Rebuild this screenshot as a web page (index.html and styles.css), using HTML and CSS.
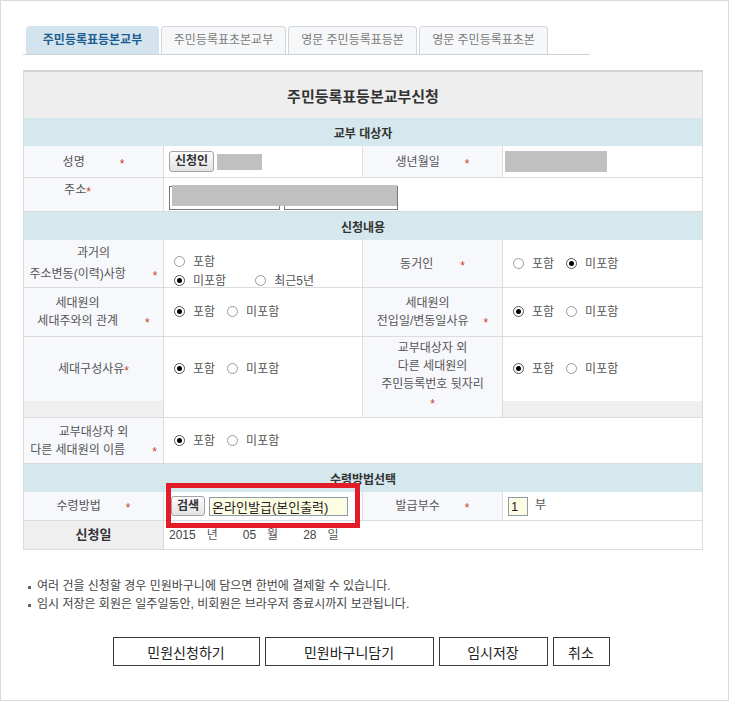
FILE: index.html
```html
<!DOCTYPE html>
<html lang="ko">
<head>
    <meta charset="UTF-8">
    <meta name="viewport" content="width=device-width, initial-scale=1.0">
    <title>주민등록표등본교부</title>
    <link rel="stylesheet" href="styles.css">
</head>
<body>
<div class="page">
    <!-- 상단 탭 -->
    <ul class="tabs">
        <li class="tab tab-1 on">주민등록표등본교부</li>
        <li class="tab tab-2">주민등록표초본교부</li>
        <li class="tab tab-3">영문 주민등록표등본</li>
        <li class="tab tab-4">영문 주민등록표초본</li>
    </ul>

    <!-- 신청서 -->
    <div class="form-wrap">
        <table class="form">
            <colgroup>
                <col class="col-lbl">
                <col class="col-val">
                <col class="col-lbl">
                <col class="col-val2">
            </colgroup>
            <tr class="row-title">
                <th colspan="4" class="title">주민등록표등본교부신청</th>
            </tr>
            <tr class="row-head">
                <th colspan="4" class="head">교부 대상자</th>
            </tr>
            <tr class="row-name">
                <th class="lbl">성명<span class="req gap-l">*</span></th>
                <td class="val"><button type="button" class="btn-s">신청인</button><span class="mask mask-name"></span></td>
                <th class="lbl">생년월일<span class="req">*</span></th>
                <td class="val"><span class="mask mask-birth"></span></td>
            </tr>
            <tr class="row-addr">
                <th class="lbl lbl-top"><span class="shift-l">주소<span class="req tight">*</span></span></th>
                <td class="val val-top" colspan="3">
                    <span class="addr">
                        <input type="text" class="addr-in addr-zip">
                        <input type="text" class="addr-in addr-rest">
                        <span class="mask mask-addr"></span>
                    </span>
                </td>
            </tr>
            <tr class="row-head">
                <th colspan="4" class="head">신청내용</th>
            </tr>
            <tr class="row-past">
                <th class="lbl lh21">과거의<br>주소변동(이력)사항<span class="req gap-m">*</span></th>
                <td class="val val-top">
                    <div class="clip">
                        <label class="opt"><span class="radio"></span>포함</label><br>
                        <label class="opt opt-wide"><span class="radio on"></span>미포함</label><label class="opt"><span class="radio"></span>최근5년</label>
                    </div>
                </td>
                <th class="lbl">동거인<span class="req gap-m">*</span></th>
                <td class="val">
                    <label class="opt"><span class="radio"></span>포함</label><label class="opt"><span class="radio on"></span>미포함</label>
                </td>
            </tr>
            <tr class="row-mem">
                <th class="lbl"><span class="shift-l">세대원의</span><br>세대주와의 관계<span class="req gap-m">*</span></th>
                <td class="val">
                    <label class="opt"><span class="radio on"></span>포함</label><label class="opt"><span class="radio"></span>미포함</label>
                </td>
                <th class="lbl"><span class="shift-s">세대원의</span><br>전입일/변동일사유<span class="req gap-s">*</span></th>
                <td class="val">
                    <label class="opt"><span class="radio on"></span>포함</label><label class="opt"><span class="radio"></span>미포함</label>
                </td>
            </tr>
            <tr class="row-comp">
                <th class="lbl open">세대구성사유<span class="req tight">*</span></th>
                <td class="val open">
                    <label class="opt"><span class="radio on"></span>포함</label><label class="opt"><span class="radio"></span>미포함</label>
                </td>
                <th class="lbl lbl-multi" rowspan="2">교부대상자 외<br>다른 세대원의<br>주민등록번호 뒷자리<br><span class="req tight">*</span></th>
                <td class="val open">
                    <label class="opt"><span class="radio on"></span>포함</label><label class="opt"><span class="radio"></span>미포함</label>
                </td>
            </tr>
            <tr class="row-strip">
                <td class="gray"></td>
                <td class="blank"></td>
                <td class="gray"></td>
            </tr>
            <tr class="row-names">
                <th class="lbl">교부대상자 외<br>다른 세대원의 이름<span class="req gap-m">*</span></th>
                <td class="val" colspan="3">
                    <label class="opt"><span class="radio on"></span>포함</label><label class="opt"><span class="radio"></span>미포함</label>
                </td>
            </tr>
            <tr class="row-head">
                <th colspan="4" class="head">수령방법선택</th>
            </tr>
            <tr class="row-recv">
                <th class="lbl">수령방법<span class="req">*</span></th>
                <td class="val"><button type="button" class="btn-s btn-find">검색</button><input type="text" class="txt txt-recv" value="온라인발급(본인출력)" readonly></td>
                <th class="lbl">발급부수<span class="req">*</span></th>
                <td class="val"><input type="text" class="txt txt-count" value="1"><span class="unit-copy">부</span></td>
            </tr>
            <tr class="row-date">
                <th class="lbl lbl-date">신청일</th>
                <td class="val" colspan="3">
                    <span class="ymd">2015</span><span class="ymd-unit">년</span><span class="ymd">05</span><span class="ymd-unit">월</span><span class="ymd">28</span><span class="ymd-unit">일</span>
                </td>
            </tr>
        </table>

        <!-- 수령방법 강조 표시 -->
        <div class="mark"></div>
    </div>

    <!-- 안내 문구 -->
    <ul class="notes">
        <li>여러 건을 신청할 경우 민원바구니에 담으면 한번에 결제할 수 있습니다.</li>
        <li>임시 저장은 회원은 일주일동안, 비회원은 브라우저 종료시까지 보관됩니다.</li>
    </ul>

    <!-- 하단 버튼 -->
    <div class="actions">
        <button type="button" class="act act-apply">민원신청하기</button>
        <button type="button" class="act act-cart">민원바구니담기</button>
        <button type="button" class="act act-save">임시저장</button>
        <button type="button" class="act act-cancel">취소</button>
    </div>
</div>
</body>
</html>
```

FILE: styles.css
```css
/* Global */
body {
    margin: 0;
    font-family: "Liberation Sans", "Noto Sans CJK KR", sans-serif;
    font-size: 12px;
    color: #444;
    background: #fff;
}

.page {
    width: 729px;
    height: 701px;
    box-sizing: border-box;
    border: 1px solid #dadada;
    padding: 25px 0 0 22px;
}

/* Tabs */
.tabs {
    display: flex;
    gap: 2px;
    width: 564px;
    margin: 0;
    padding: 0 0 0 3px;
    list-style: none;
    border-bottom: 1px solid #cfd3d8;
}
.tab {
    height: 28px;
    box-sizing: border-box;
    line-height: 26px;
    text-align: center;
    border: 1px solid #d3d7dc;
    border-bottom: 0;
    border-radius: 4px 4px 0 0;
    background: #f6f7f9;
    color: #7a7a7a;
    white-space: nowrap;
}
.tab.on {
    background: #d4e4ee;
    border-color: #d4e4ee;
    color: #1c5d8f;
    font-weight: bold;
}
.tab-1 { width: 133px; }
.tab-2 { width: 125px; }
.tab-3 { width: 129px; }
.tab-4 { width: 129px; }

/* Form table */
.form-wrap {
    position: relative;
    width: 680px;
    margin-top: 15px;
}
.form {
    width: 680px;
    table-layout: fixed;
    border-collapse: separate;
    border-spacing: 0;
    border-top: 2px solid #d2d2d2;
    border-left: 1px solid #dcdcdc;
}
.col-lbl { width: 140px; }
.col-val { width: 199px; }
.col-val2 { width: 200px; }

.form th,
.form td {
    padding: 0;
    border-right: 1px solid #dcdcdc;
    border-bottom: 1px solid #dcdcdc;
    font-weight: normal;
}
.form .open { border-bottom: 0; }

.row-title { height: 46px; }
.row-head { height: 28px; }
.row-name { height: 32px; }
.row-addr { height: 34px; }
.row-past { height: 48px; }
.row-mem { height: 49px; }
.row-comp { height: 64px; }
.row-strip { height: 17px; }
.row-names { height: 46px; }
.row-recv { height: 29px; }
.row-date { height: 29px; }

.form .title {
    background: #eeeeee;
    color: #333;
    font-size: 15px;
    font-weight: bold;
    text-align: center;
    border-bottom: 0;
}
.form .head {
    background: #d5e8ed;
    color: #333;
    font-weight: bold;
    text-align: center;
    border-bottom: 0;
}

.form .lbl {
    background: #f7f8fc;
    color: #555;
    text-align: center;
    line-height: 18px;
    white-space: nowrap;
}
.form .lbl-top {
    vertical-align: top;
    padding-top: 3px;
}
.form .lh21 { line-height: 21px; }
.form .lbl-multi { padding-bottom: 4px; }
.form .lbl-date {
    background: #efefef;
    color: #333;
    font-weight: bold;
    font-size: 13px;
}
.form .gray { background: #efefef; }
.form .blank { background: #fff; }

.shift-l { padding-right: 32px; }
.shift-s { padding-right: 10px; }

.req {
    color: #c4421f;
    margin-left: 25px;
    position: relative;
    top: 2px;
}
.req.gap-l { margin-left: 35px; }
.req.gap-m { margin-left: 27px; }
.req.gap-s { margin-left: 15px; }
.req.tight { margin-left: 0; }

.form .val {
    padding-left: 5px;
    text-align: left;
    line-height: 18px;
    color: #444;
    white-space: nowrap;
}
.form .val-top {
    vertical-align: top;
    padding-top: 8px;
}
.form .row-past .val-top { padding-top: 0; }

.clip {
    height: 47px;
    overflow: hidden;
    box-sizing: border-box;
    padding-top: 13px;
    line-height: 19px;
}

/* Radio options */
.opt {
    margin-right: 7px;
    color: #555;
}
.opt-wide { margin-right: 24px; }
.radio {
    display: inline-block;
    position: relative;
    width: 11px;
    height: 11px;
    box-sizing: border-box;
    margin: 0 8px 0 5px;
    border: 1px solid #9a9a9a;
    border-radius: 50%;
    background: #fff;
    vertical-align: -1px;
}
.radio.on { border-color: #555; }
.radio.on::after {
    content: "";
    position: absolute;
    left: 2px;
    top: 2px;
    width: 5px;
    height: 5px;
    border-radius: 50%;
    background: #000;
}

/* Small buttons and inputs */
.btn-s {
    height: 21px;
    margin: 0;
    padding: 0 5px;
    border: 1px solid #a3a3a3;
    border-radius: 3px;
    background: linear-gradient(#fdfdfd, #e2e2e2);
    font: bold 12px "Liberation Sans", "Noto Sans CJK KR", sans-serif;
    line-height: 19px;
    color: #333;
    vertical-align: middle;
}
.btn-find {
    height: 20px;
    margin-left: 2px;
}

.mask {
    display: inline-block;
    background: #c0c0c0;
    vertical-align: middle;
}
.mask-name {
    width: 45px;
    height: 16px;
    margin-left: 3px;
}
.mask-birth {
    width: 102px;
    height: 21px;
    margin-left: -3px;
}

.addr {
    position: relative;
    display: inline-flex;
    gap: 4px;
}
.addr-in {
    height: 24px;
    margin: 0;
    padding: 0;
    box-sizing: border-box;
    border: 1px solid #777;
    background: #fff;
}
.addr-zip { width: 111px; }
.addr-rest { width: 114px; }
.mask-addr {
    position: absolute;
    left: 3px;
    top: -1px;
    width: 225px;
    height: 21px;
}

.txt {
    height: 19px;
    margin: 0;
    padding: 0 2px;
    box-sizing: border-box;
    border: 1px solid #8d9aab;
    background: #fdfde3;
    font: 13px "Liberation Sans", "Noto Sans CJK KR", sans-serif;
    color: #222;
    vertical-align: middle;
}
.txt-recv {
    width: 139px;
    margin-left: 4px;
}
.txt-count { width: 20px; }
.unit-copy {
    margin-left: 7px;
    color: #555;
}

.ymd { color: #444; }
.ymd-unit {
    margin: 0 25px 0 11px;
    color: #555;
}

/* Red highlight around the delivery method */
.mark {
    position: absolute;
    left: 143px;
    top: 413px;
    width: 194px;
    height: 45px;
    box-sizing: border-box;
    border: 5px solid #e31d27;
}

/* Notes */
.notes {
    margin: 27px 0 0 5px;
    padding: 0;
    list-style: none;
    line-height: 18px;
    color: #444;
}
.notes li {
    position: relative;
    padding-left: 9px;
}
.notes li::before {
    content: "";
    position: absolute;
    left: 0;
    top: 9px;
    width: 3px;
    height: 3px;
    background: #666;
}

/* Bottom buttons */
.actions {
    display: flex;
    justify-content: center;
    gap: 5px;
    width: 676px;
    margin-top: 24px;
}
.act {
    height: 29px;
    margin: 0;
    border: 1px solid #3c3c3c;
    background: #fff;
    font: 14px "Liberation Sans", "Noto Sans CJK KR", sans-serif;
    color: #222;
}
.act-apply { width: 147px; }
.act-cart { width: 169px; }
.act-save { width: 109px; }
.act-cancel { width: 57px; }
```
